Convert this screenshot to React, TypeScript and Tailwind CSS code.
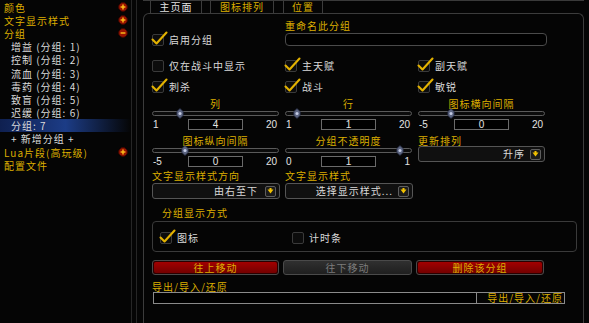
import React from "react";

const gold = "text-[#dcae00]";
const white = "text-[#dadada]";

function Toggle({ minus = false }: { minus?: boolean }) {
  return (
    <svg className="absolute left-[118px]" width="10" height="10" viewBox="0 0 10 10">
      <circle cx="5" cy="5" r="4.4" fill="#9a1400" stroke="#3a0800" strokeWidth="1" />
      <line x1="2.6" y1="5" x2="7.4" y2="5" stroke="#ffc21a" strokeWidth="1.4" />
      {!minus && <line x1="5" y1="2.6" x2="5" y2="7.4" stroke="#ffc21a" strokeWidth="1.4" />}
    </svg>
  );
}

function Check({ on }: { on: boolean }) {
  return (
    <span className="relative block w-[12px] h-[12px] shrink-0 rounded-[2px] border border-[#3a3a3a] bg-[#0c0c0c]">
      {on && (
        <svg className="absolute left-[-2px] top-[-4px]" width="17" height="15" viewBox="0 0 17 15">
          <path d="M1.5 8.5 L5.5 12.5 L15.5 1.5" stroke="#e3b200" strokeWidth="2.1" fill="none" strokeLinecap="round" strokeLinejoin="round" />
        </svg>
      )}
    </span>
  );
}

function CheckItem({ on, label, className = "" }: { on: boolean; label: string; className?: string }) {
  return (
    <div className={`flex items-center gap-[5px] h-[12px] ${className}`}>
      <Check on={on} />
      <span className={`${white} leading-[12px] whitespace-nowrap`}>{label}</span>
    </div>
  );
}

function Slider({ label, min, max, value }: { label: string; min: number; max: number; value: number }) {
  const pos = 11 + ((value - min) / (max - min)) * 103;
  return (
    <div className="flex flex-col">
      <div className={`${gold} h-[12px] leading-[12px] text-center whitespace-nowrap`}>{label}</div>
      <div className="relative mt-[1px] h-[5px] rounded-full border border-[#5a5a5a] bg-[#0b0b0b]">
        <svg className="absolute top-[-4px]" style={{ left: pos - 4 }} width="8" height="11" viewBox="0 0 8 11">
          <path d="M4 0.5 L7.2 3.5 L7.2 7.5 L4 10.5 L0.8 7.5 L0.8 3.5 Z" fill="#5d6682" stroke="#20243a" strokeWidth="0.8" />
          <circle cx="4" cy="5.5" r="1.5" fill="#c4cbe4" />
        </svg>
      </div>
      <div className="mt-[3px] h-[11px] grid grid-cols-[1fr_55px_1fr] items-center font-['Liberation_Sans',sans-serif] tracking-normal text-[10px] leading-[11px] text-[#e4e4e4]">
        <span className="pl-[1px]">{min}</span>
        <span className="h-[11px] border border-[#6a6a6a] bg-black text-center leading-[9px]">{value}</span>
        <span className="text-right pr-[2px]">{max}</span>
      </div>
    </div>
  );
}

function Dropdown({ text, className = "" }: { text: string; className?: string }) {
  return (
    <div className={`h-[16px] rounded-[3px] border border-[#555] bg-[#101010] flex items-center justify-end pr-[3px] gap-[5px] ${className}`}>
      <span className={`${white} leading-[12px] whitespace-nowrap`}>{text}</span>
      <span className="w-[11px] h-[11px] rounded-[2px] border border-[#5e5e5e] bg-[#1c1c1c] flex items-center justify-center">
        <svg width="7" height="6" viewBox="0 0 7 6">
          <path d="M0.5 1.5 L6.5 1.5 L3.5 5.5 Z" fill="#f0c000" />
          <rect x="2.5" y="0" width="2" height="2" fill="#f0c000" />
        </svg>
      </span>
    </div>
  );
}

function RedButton({ text }: { text: string }) {
  return (
    <div className="h-[15px] rounded-[3px] border border-[#4a4a4a] bg-[#2a0000] p-[1px]">
      <div className={`h-full rounded-[2px] bg-gradient-to-b from-[#a30000] to-[#740000] ${gold} text-center leading-[11px] text-[10px]`}>{text}</div>
    </div>
  );
}

export default function App() {
  const nav: { text: string; level: 0 | 1; color: string; icon?: "plus" | "minus"; active?: boolean }[] = [
    { text: "颜色", level: 0, color: gold, icon: "plus" },
    { text: "文字显示样式", level: 0, color: gold, icon: "plus" },
    { text: "分组", level: 0, color: gold, icon: "minus" },
    { text: "增益 (分组: 1)", level: 1, color: white },
    { text: "控制 (分组: 2)", level: 1, color: white },
    { text: "流血 (分组: 3)", level: 1, color: white },
    { text: "毒药 (分组: 4)", level: 1, color: white },
    { text: "致盲 (分组: 5)", level: 1, color: white },
    { text: "迟缓 (分组: 6)", level: 1, color: white },
    { text: "分组: 7", level: 1, color: white, active: true },
    { text: "+ 新增分组 +", level: 1, color: white },
    { text: "Lua片段(高玩级)", level: 0, color: gold, icon: "plus" },
    { text: "配置文件", level: 0, color: gold },
  ];

  return (
    <div className="w-[589px] h-[323px] bg-[#050505] flex overflow-hidden font-['Noto_Sans_CJK_SC',sans-serif] text-[10px] tracking-[1px]">
      <div className="w-[132px] shrink-0 border-r border-[#262626] flex flex-col pt-[0.5px]">
        {nav.map((n) => (
          <div
            key={n.text}
            className={`relative h-[13.2px] flex items-center ${n.level === 0 ? "pl-[4px]" : "pl-[11px]"} ${
              n.active ? "bg-gradient-to-r from-[#0f2050] via-[#1c3c86] to-transparent" : ""
            }`}
          >
            <span className={`${n.color} leading-[11px] whitespace-nowrap`}>{n.text}</span>
            {n.icon && <Toggle minus={n.icon === "minus"} />}
          </div>
        ))}
      </div>
      <div className="w-[5px] shrink-0 border-r border-[#262626]" />

      <div className="ml-[6px] w-[441px] flex flex-col border-t border-[#3a3a3a]">
        <div className="h-[12px] flex pl-[7px] items-stretch">
          <div className="w-[52px] border-x border-[#3c3c3c] text-center leading-[11px] text-[#e2e2e2]">主页面</div>
          <div className={`ml-[8px] w-[64px] border-x border-[#3c3c3c] text-center leading-[11px] ${gold}`}>图标排列</div>
          <div className={`ml-[9px] w-[40px] border-x border-[#3c3c3c] text-center leading-[11px] ${gold}`}>位置</div>
        </div>

        <div className="flex-1 rounded-t-[6px] border border-b-0 border-[#3c3c3c] px-[8px] flex flex-col">
          <div className="grid grid-cols-[127px_127px_127px] gap-x-[6px]">
            <CheckItem on label="启用分组" className="mt-[20px]" />
            <div className="col-span-2 flex flex-col">
              <div className={`${gold} mt-[6px] h-[12px] leading-[12px]`}>重命名此分组</div>
              <div className="mt-[1px] h-[13px] w-[262px] rounded-[4px] border border-[#4a4a4a] bg-black" />
            </div>
          </div>

          <div className="mt-[14px] grid grid-cols-[127px_127px_127px] gap-x-[6px]">
            <CheckItem on={false} label="仅在战斗中显示" />
            <CheckItem on label="主天赋" />
            <CheckItem on label="副天赋" />
          </div>
          <div className="mt-[9px] grid grid-cols-[127px_127px_127px] gap-x-[6px]">
            <CheckItem on label="刺杀" />
            <CheckItem on label="战斗" />
            <CheckItem on label="敏锐" />
          </div>

          <div className="mt-[5px] grid grid-cols-[127px_127px_127px] gap-x-[6px]">
            <Slider label="列" min={1} max={20} value={4} />
            <Slider label="行" min={1} max={20} value={1} />
            <Slider label="图标横向间隔" min={-5} max={20} value={0} />
          </div>

          <div className="mt-[5px] grid grid-cols-[127px_127px_127px] gap-x-[6px]">
            <Slider label="图标纵向间隔" min={-5} max={20} value={0} />
            <Slider label="分组不透明度" min={0} max={1} value={1} />
            <div className="flex flex-col">
              <div className={`${gold} h-[11px] leading-[12px]`}>更新排列</div>
              <Dropdown text="升序" />
            </div>
          </div>

          <div className="mt-[3px] grid grid-cols-[128px_128px] gap-x-[5px]">
            <div className="flex flex-col">
              <div className={`${gold} h-[12px] leading-[12px] whitespace-nowrap`}>文字显示样式方向</div>
              <Dropdown text="由右至下" className="mt-[1px] pr-[2px] gap-[7px]" />
            </div>
            <div className="flex flex-col">
              <div className={`${gold} h-[12px] leading-[12px] whitespace-nowrap`}>文字显示样式</div>
              <Dropdown text="选择显示样式..." className="mt-[1px]" />
            </div>
          </div>

          <div className={`${gold} mt-[8px] ml-[10px] h-[12px] leading-[12px]`}>分组显示方式</div>
          <div className="mt-[2px] w-[425px] h-[31px] rounded-[4px] border border-[#3a3a3a] pl-[7px] pt-[10px] grid grid-cols-[132px_auto]">
            <CheckItem on label="图标" />
            <CheckItem on={false} label="计时条" />
          </div>

          <div className="mt-[8px] grid grid-cols-[127px_129px_128px] gap-x-[4px]">
            <RedButton text="往上移动" />
            <div className="h-[15px] rounded-[3px] border border-[#4a4a4a] bg-gradient-to-b from-[#303030] to-[#1f1f1f] text-center leading-[13px] text-[#7c7c7c]">往下移动</div>
            <RedButton text="删除该分组" />
          </div>

          <div className={`${gold} mt-[6px] h-[11px] leading-[12px]`}>导出/导入/还原</div>
          <div className="ml-[1px] flex h-[12px]">
            <div className="w-[324px] border border-[#8a8a8a] bg-black" />
            <div className={`w-[88px] border border-l-0 border-[#8a8a8a] ${gold} text-right pr-[1px] leading-[10px] whitespace-nowrap`}>导出/导入/还原</div>
          </div>
        </div>
      </div>
    </div>
  );
}
